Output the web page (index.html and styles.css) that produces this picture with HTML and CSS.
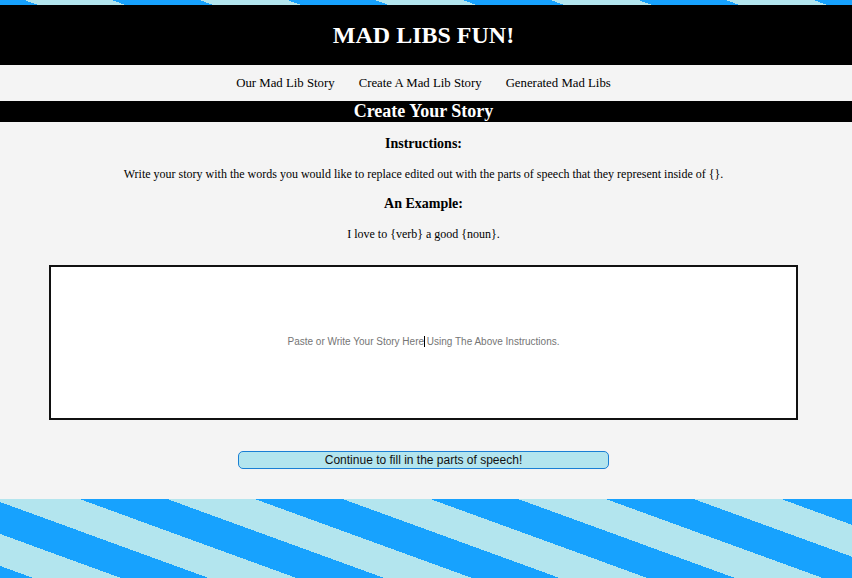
FILE: index.html
```html
<!DOCTYPE html>
<html lang="en">
<head>
<meta charset="utf-8">
<title>Mad Libs Fun!</title>
<link rel="stylesheet" href="styles.css">
</head>
<body>
<header class="site-header">
  <h1 class="site-title">MAD LIBS FUN!</h1>
</header>
<nav class="site-nav">
  <a href="#" class="nav-link">Our Mad Lib Story</a>
  <a href="#" class="nav-link">Create A Mad Lib Story</a>
  <a href="#" class="nav-link">Generated Mad Libs</a>
</nav>
<main class="page">
  <h2 class="section-title">Create Your Story</h2>
  <section class="create">
    <h3 class="label">Instructions:</h3>
    <p class="text">Write your story with the words you would like to replace edited out with the parts of speech that they represent inside of {}.</p>
    <h3 class="label">An Example:</h3>
    <p class="text">I love to {verb} a good {noun}.</p>
    <div class="story-wrap">
      <textarea class="story" placeholder="Paste or Write Your Story Here Using The Above Instructions."></textarea>
      <span class="caret"></span>
    </div>
    <button class="continue" type="button">Continue to fill in the parts of speech!</button>
  </section>
</main>
</body>
</html>
```
FILE: styles.css
```css
html {
  min-height: 100%;
  background-color: #b3e5ee;
  background-image: repeating-linear-gradient(20deg, #17a2fe 0 11.4px, #b3e5ee 11.4px 41.4px, #17a2fe 41.4px 60px);
  background-attachment: fixed;
}

body {
  margin: 0;
  padding-top: 5px;
  font-family: "Liberation Serif", "Times New Roman", serif;
  color: #000;
}

.site-header {
  background: #000;
  height: 60px;
  display: flex;
  align-items: center;
  justify-content: center;
  padding-right: 5px;
}

.site-title {
  margin: 0;
  color: #fff;
  font-size: 24px;
  line-height: 28px;
  font-weight: bold;
}

.site-nav {
  background: #f4f4f4;
  height: 36px;
  display: flex;
  align-items: center;
  justify-content: center;
  gap: 24px;
  padding-right: 5px;
}

.nav-link {
  color: #000;
  text-decoration: none;
  font-size: 12.8px;
  line-height: 15px;
}

.section-title {
  margin: 0;
  padding-right: 5px;
  background: #000;
  color: #fff;
  text-align: center;
  font-size: 18px;
  line-height: 21px;
  font-weight: bold;
}

.create {
  background: #f4f4f4;
  padding: 14px 5px 30px 0;
}

.label {
  margin: 0;
  font-size: 14px;
  line-height: 16px;
  font-weight: bold;
  text-align: center;
}

.text {
  margin: 14px 0;
  font-size: 12px;
  line-height: 16px;
  text-align: center;
}

.text:last-of-type {
  margin-bottom: 23px;
}

.story-wrap {
  position: relative;
  margin: 0 49px;
  height: 155px;
}

.story {
  display: block;
  box-sizing: border-box;
  width: 100%;
  height: 155px;
  margin: 0;
  border: 2px solid #111;
  background: #fff;
  resize: none;
  outline: none;
  padding: 69px 4px 0;
  font-family: "Liberation Sans", Arial, sans-serif;
  font-size: 10px;
  line-height: 12px;
  text-align: center;
  color: #000;
}

.story::placeholder {
  color: #757575;
  opacity: 1;
}

.caret {
  position: absolute;
  left: 375px;
  top: 71px;
  width: 1px;
  height: 11px;
  background: #000;
}

.continue {
  display: block;
  box-sizing: border-box;
  margin: 31px auto 0;
  width: 371px;
  height: 18px;
  padding: 0;
  background: #b3e5ee;
  border: 1px solid #1a7fd4;
  border-radius: 5px;
  font-family: "Liberation Sans", Arial, sans-serif;
  font-size: 12px;
  line-height: 16px;
  color: #111;
}
```
